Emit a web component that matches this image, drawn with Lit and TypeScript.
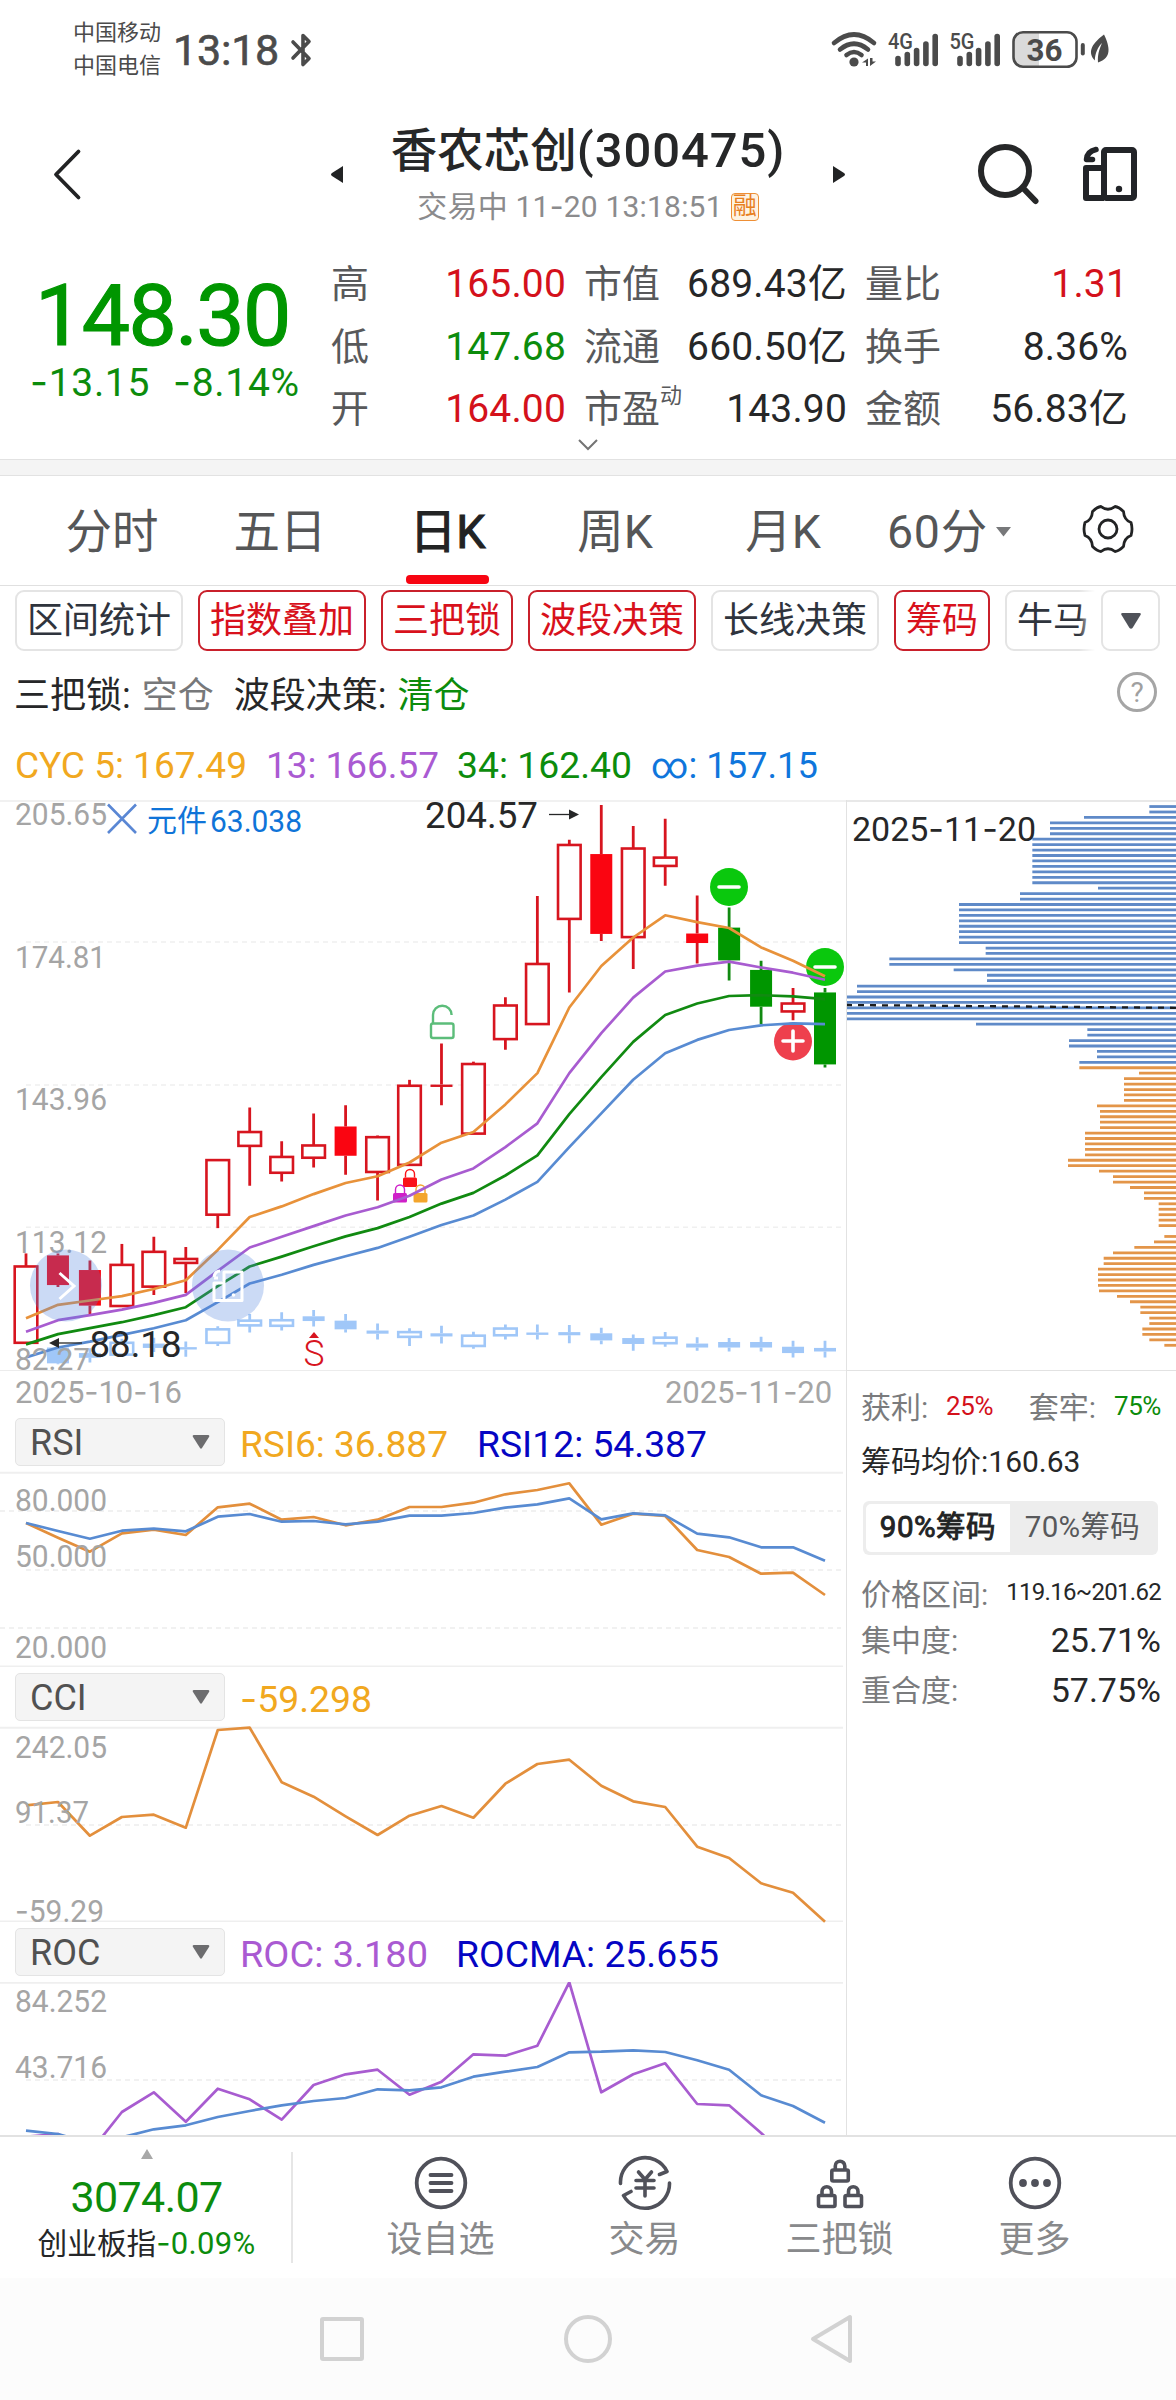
import { LitElement, html, svg, css } from "lit";
import { customElement, property } from "lit/decorators.js";

/* Hyphens are drawn with a wider glyph than the digit font offers. */
const num = (s: string) =>
  s.split(/(-)/).map((p) => (p === "-" ? html`<span class="dash">-</span>` : p));
const snum = (s: string) =>
  s.split(/(-)/).map((p) => (p === "-" ? svg`<tspan class="dash">-</tspan>` : p));

const label = (x: number, y: number, w: number, size: number, color: string, s: string, weight = 400) =>
  svg`<text x=${x} y=${y} textLength=${w} lengthAdjust="spacingAndGlyphs" font-size=${size} font-weight=${weight} fill=${color}>${snum(s)}</text>`;

const PITCH = 31.96;
const cx = (i: number) => 26 + PITCH * i;
const line = (vals: number[], y0: number, scale: number, color: string, w = 2.7) =>
  svg`<polyline fill="none" stroke=${color} stroke-width=${w} stroke-linejoin="round"
    points=${vals.map((v, i) => `${cx(i).toFixed(1)},${(y0 + v / scale).toFixed(1)}`).join(" ")} />`;

type Candle = [number, number, number, number, string];

const CANDLES: Candle[] = [
  [1172, 1205, 1398, 1398, "h"], [1172, 1177, 1252, 1257, "r"], [1190, 1214, 1304, 1327, "r"],
  [1148, 1201, 1305, 1305, "h"], [1130, 1168, 1256, 1277, "h"], [1156, 1186, 1196, 1272, "h"],
  [936, 936, 1074, 1108, "h"], [803, 865, 900, 1001, "h"], [888, 928, 968, 990, "h"],
  [818, 899, 930, 955, "h"], [797, 851, 925, 973, "r"], [874, 878, 966, 1038, "h"],
  [733, 748, 948, 948, "h"], [641, 745, 751, 797, "d"], [687, 693, 869, 869, "h"],
  [524, 545, 630, 657, "h"], [268, 440, 592, 592, "h"], [126, 139, 326, 512, "h"],
  [38, 162, 364, 382, "r"], [91, 148, 372, 453, "h"], [73, 171, 192, 242, "h"],
  [267, 363, 387, 439, "r"], [297, 348, 431, 482, "g"], [432, 455, 548, 592, "g"],
  [501, 540, 560, 582, "h"], [501, 512, 694, 702, "g"],
];
const INDEX: Candle[] = [
  [1378, 1396, 1397, 1397, "f"], [1405, 1410, 1450, 1452, "f"], [1412, 1424, 1436, 1448, "f"],
  [1388, 1398, 1428, 1428, "h"], [1385, 1400, 1411, 1421, "f"], [1395, 1409, 1415, 1433, "f"],
  [1356, 1364, 1398, 1406, "h"], [1325, 1342, 1354, 1372, "h"], [1321, 1341, 1355, 1367, "h"],
  [1315, 1331, 1343, 1357, "f"], [1325, 1342, 1364, 1372, "f"], [1349, 1367, 1375, 1390, "f"],
  [1361, 1371, 1383, 1406, "h"], [1355, 1374, 1382, 1400, "f"], [1370, 1380, 1406, 1413, "h"],
  [1352, 1362, 1379, 1390, "h"], [1352, 1372, 1378, 1390, "f"], [1353, 1371, 1379, 1399, "f"],
  [1360, 1374, 1392, 1402, "f"], [1377, 1386, 1401, 1418, "f"], [1371, 1385, 1399, 1408, "h"],
  [1384, 1400, 1410, 1418, "f"], [1386, 1396, 1410, 1420, "f"], [1383, 1396, 1410, 1420, "f"],
  [1393, 1408, 1424, 1435, "f"], [1393, 1411, 1420, 1435, "f"],
];
const MA: [string, number[]][] = [
  ["#e8923a", [1336, 1302, 1291, 1280, 1262, 1240, 1163, 1080, 1053, 1022, 994, 977, 942, 892, 865, 795, 716, 550, 445, 373, 317, 334, 349, 398, 432, 471]],
  ["#a85cd0", [1370, 1341, 1328, 1314, 1297, 1277, 1216, 1157, 1130, 1103, 1076, 1055, 1026, 985, 957, 903, 843, 716, 615, 525, 459, 444, 434, 449, 462, 480]],
  ["#118a11", [1402, 1376, 1361, 1346, 1328, 1308, 1255, 1205, 1180, 1154, 1129, 1108, 1080, 1046, 1019, 975, 924, 820, 726, 637, 569, 540, 521, 519, 522, 529]],
  ["#588bd2", [1435, 1410, 1395, 1378, 1361, 1341, 1295, 1248, 1226, 1201, 1179, 1158, 1130, 1100, 1076, 1036, 991, 903, 818, 733, 666, 632, 607, 595, 590, 592]],
];

/* Run lengths of the cost distribution: [rows, left edge]; 0 leaves a row empty. */
const BLUE_RUNS = [[2, 958], [1, 762], [3, 660], [9, 607], [1, 804], [2, 570], [8, 387], [2, 467], [2, 178], [1, 371], [2, 471], [2, 81], [5, 48], [1, 438], [2, 772], [2, 717], [2, 801], [1, 748]];
const ORANGE_RUNS = [[1, 748], [1, 927], [5, 882], [1, 801], [4, 810], [5, 765], [2, 714], [1, 807], [2, 849], [1, 900], [2, 942], [5, 986], [1, 0], [1, 1003], [1, 972], [1, 913], [1, 849], [2, 821], [4, 804], [1, 807], [1, 861], [1, 900], [2, 931], [2, 958], [2, 937], [1, 958], [1, 1003]];
const expand = (runs: number[][]) => runs.flatMap(([n, u]) => Array(n).fill(u) as number[]);

const vy = (v: number) => 790 + v / 2.529;

const candle = ([hi, top, bot, lo, t]: Candle, i: number, hollow: string) => {
  const x = cx(i);
  const color = t === "g" ? "#009600" : t === "r" ? "#fa0511" : hollow;
  const wick = t === "g" ? "#118a11" : hollow;
  const open = t === "h";
  return svg`
    <path d="M${x} ${vy(hi)}V${vy(top)}M${x} ${vy(bot)}V${vy(lo)}" stroke=${wick} stroke-width="2.8"/>
    ${open
      ? svg`<rect x=${x - 11.3} y=${vy(top)} width="22.6" height=${vy(bot) - vy(top)} fill="#fff" stroke=${color} stroke-width="2.6"/>`
      : svg`<rect x=${x - 11} y=${vy(top)} width="22" height=${vy(bot) - vy(top)} fill=${color}/>`}`;
};

const lock = (x: number, y: number, c: string) => svg`
  <path d="M${x - 4.5} ${y}v-3.500a4.500 4.500 0 0 1 9 0v3.500" fill="none" stroke=${c} stroke-width="1.4"/>
  <rect x=${x - 7} y=${y} width="14" height="9.5" rx="1.5" fill=${c}/>`;

const chartFont = css`
  text { font-family: Roboto, "Noto Sans CJK SC", sans-serif; }
  .dash { font-family: Inter, sans-serif; }
  svg { display: block; }
  .free { overflow: visible; }
`;

@customElement("kline-chart")
class KlineChart extends LitElement {
  static styles = [chartFont, css`:host { display: block; }`];
  render() {
    return html`<svg class="free" width="846" height="570" viewBox="0 800 846 570">
      <path d="M0 801H846" stroke="#ececec" stroke-width="1.4"/>
      <path d="M26 942H841M26 1085H841M26 1227.200H841" stroke="#f0f0f0" stroke-width="1.6" stroke-dasharray="5 4"/>
      ${INDEX.map((c, i) => candle(c, i, "#a0c7f8"))}
      ${CANDLES.map((c, i) => candle(c, i, "#d7151f"))}
      ${lock(410, 1177.5, "#fa1218")}${lock(400, 1193, "#cf1fc8")}${lock(420.5, 1193, "#f3a52c")}
      <g><circle cx="729" cy="887" r="19" fill="#0ac80d"/><path d="M719 887h20" stroke="#fff" stroke-width="3.6" stroke-linecap="round"/>
      <circle cx="825" cy="967" r="19" fill="#0ac80d"/><path d="M815 967h20" stroke="#fff" stroke-width="3.6" stroke-linecap="round"/>
      <circle cx="793" cy="1041.500" r="19" fill="#ee404d"/><path d="M783 1041h20M793 1031v20" stroke="#fff" stroke-width="3.6" stroke-linecap="round"/></g>
      ${MA.map(([c, v]) => line(v, 790, 2.529, c))}
      <g fill="none" stroke="#5cbd7a" stroke-width="2.4"><rect x="431" y="1023.500" width="22.500" height="14.500" rx="2"/><path d="M433 1023v-8a9.300 9.300 0 0 1 18.600 0"/></g>
      <path d="M309 1338l5-6 5 6z" fill="#d7151f"/>
      ${label(303.5, 1366, 21, 36, "#d7151f", "S", 300)}
      ${label(15, 825, 92, 31, "#a5a5a5", "205.65")}
      ${label(15, 968, 91, 31, "#a5a5a5", "174.81")}
      ${label(15, 1110, 92, 31, "#a5a5a5", "143.96")}
      ${label(15, 1252.5, 92, 31, "#a5a5a5", "113.12")}
      ${label(15, 1369.5, 75, 31, "#a5a5a5", "82.27")}
      <path d="M108 804.500L136 833M136 804.500L108 833" stroke="#5a87d4" stroke-width="2.6"/>
      ${label(147, 831, 60, 30, "#0f74d8", "元件")}
      ${label(210, 831.5, 92, 31, "#0f74d8", "63.038")}
      ${label(425, 828, 113, 37, "#262728", "204.57")}
      <path d="M549 814.500h22" stroke="#262728" stroke-width="1.3"/><path d="M569 809.500l10 5-10 5z" fill="#262728"/>
      ${label(89.5, 1357, 92, 37, "#262728", "88.18")}
      <path d="M82 1343H56" stroke="#262728" stroke-width="1.3"/><path d="M59 1338l-10 5 10 5z" fill="#262728"/>
      <circle cx="66" cy="1285.500" r="36" fill="#5485de" fill-opacity=".3"/>
      <path d="M59.500 1273l14.500 13-14.500 13" fill="none" stroke="#fff" stroke-width="3"/>
      <circle cx="228" cy="1285.500" r="36" fill="#5485de" fill-opacity=".3"/>
      <g fill="none" stroke="#fff" stroke-width="3" stroke-linejoin="round"><rect x="224" y="1272" width="18" height="28.500"/><path d="M224 1283h-10v17.500h10M214 1277q1-6 6-6M214 1278h4"/></g>
      <circle cx="233.500" cy="1295" r="1.800" fill="#fff"/>
    </svg>`;
  }
}

@customElement("cost-chart")
class CostChart extends LitElement {
  static styles = [chartFont, css`:host { display: block; }`];
  render() {
    const rows = [...expand(BLUE_RUNS).map((u) => [u, "#5f8ac8"]), ...expand(ORANGE_RUNS).map((u) => [u, "#e39549"])] as [number, string][];
    return html`<svg width="330" height="570" viewBox="847 800 330 570">
      <path d="M846 801H1177" stroke="#e0e0e0" stroke-width="1.4"/>
      ${rows.map(([u, c], i) => {
        if (!u) return null;
        const y = 790 + (44.7 + 14.71 * i) / 2.703;
        return svg`<path d="M${830 + u / 3} ${y}H1177" stroke=${c} stroke-width="2.8"/>`;
      })}
      <path d="M846 1005L1177 1007.800" stroke="#1c1c1c" stroke-width="2.300" stroke-dasharray="6 6"/>
      ${label(852, 841, 184, 34, "#262728", "2025-11-20")}
    </svg>`;
  }
}

interface Reading { text: string; color: string; x: number; w: number }
interface Study {
  name: string; top: number; height: number; readings: Reading[];
  grids: [number, number][]; labels: [string, number, number][];
  lines: [string, number[]][]; y0: number;
}
const STUDIES: Study[] = [
  {
    name: "RSI", top: 1472, height: 195, y0: 1370,
    readings: [{ text: "RSI6: 36.887", color: "#f1a820", x: 240, w: 208 }, { text: "RSI12: 54.387", color: "#0505c3", x: 477, w: 230 }],
    grids: [[0, 1511], [26, 1570], [0, 1628]],
    labels: [["80.000", 1510.5, 92], ["50.000", 1567, 92], ["20.000", 1658, 92]],
    lines: [
      ["#e38f3c", [459, 503, 545, 490, 479, 495, 412, 401, 449, 441, 466, 449, 411, 411, 398, 373, 360, 340, 464, 431, 438, 540, 561, 611, 608, 675]],
      ["#588bd2", [459, 483, 506, 482, 476, 484, 440, 432, 455, 453, 463, 455, 437, 437, 429, 413, 403, 385, 448, 430, 436, 491, 502, 532, 532, 572]],
    ],
  },
  {
    name: "CCI", top: 1727, height: 195, y0: 1670,
    readings: [{ text: "-59.298", color: "#f1a820", x: 240, w: 132 }],
    grids: [[26, 1825]],
    labels: [["242.05", 1757.5, 92], ["91.37", 1822.5, 74], ["-59.29", 1922, 89]],
    lines: [["#e38f3c", [406, 396, 497, 441, 434, 473, 180, 173, 337, 380, 439, 495, 437, 408, 443, 341, 282, 269, 347, 394, 411, 530, 564, 640, 668, 755]]],
  },
  {
    name: "ROC", top: 1982, height: 154, y0: 1670,
    readings: [{ text: "ROC: 3.180", color: "#aa5ad2", x: 240, w: 188 }, { text: "ROCMA: 25.655", color: "#0505c3", x: 456, w: 263 }],
    grids: [[26, 2080]],
    labels: [["84.252", 2012, 92], ["43.716", 2077.5, 92]],
    lines: [
      ["#a85cd0", [1400, 1392, 1447, 1326, 1267, 1355, 1256, 1288, 1349, 1245, 1213, 1199, 1274, 1235, 1153, 1157, 1127, 937, 1267, 1213, 1180, 1302, 1306, 1389, 1480, 1560]],
      ["#588bd2", [1382, 1392, 1420, 1402, 1378, 1366, 1341, 1323, 1306, 1293, 1284, 1258, 1261, 1252, 1220, 1205, 1191, 1147, 1145, 1141, 1146, 1171, 1199, 1276, 1308, 1358]],
    ],
  },
];

@customElement("study-panel")
class StudyPanel extends LitElement {
  static styles = [chartFont, css`
    :host { display: block; }
    .head { display: flex; height: 60px; align-items: center; padding: 0 0 0 15px; box-sizing: border-box; }
    .pick { display: flex; align-items: center; justify-content: space-between; box-sizing: border-box; width: 210px; height: 48px; margin-top: -1px;
      border: 1.5px solid #e4e4e4; border-radius: 5px; background: #f4f4f4; padding: 3px 14px 0 14px; color: #515151; font: 36px/44px Roboto, sans-serif; }
    .caret { margin-top: -3px; }
  `];
  @property({ attribute: false }) study!: Study;
  render() {
    const s = this.study;
    const last = s.height < 160;
    return html`
      <div class="head">
        <div class="pick"><span>${s.name}</span><svg class="caret" width="18" height="14"><path d="M2 0h14q2 0 1 2l-7 11q-1 1.500-2 0l-7-11q-1-2 1-2z" fill="#6c6c6e"/></svg></div>
        <svg width="610" height="60" viewBox="225 0 610 60">${s.readings.map((r) => label(r.x, 44.5, r.w, 36, r.color, r.text))}</svg>
      </div>
      <svg class=${last ? "" : "free"} width="846" height=${s.height} viewBox="0 ${s.top} 846 ${s.height}">
        <path d="M0 ${s.top + 0.8}H843" stroke="#efefef" stroke-width="2"/>
        ${last ? null : svg`<path d="M0 ${s.top + s.height - 0.8}H843" stroke="#efefef" stroke-width="1.600"/>`}
        ${s.grids.map(([x, y]) => svg`<path d="M${x} ${y}H841" stroke="#ededed" stroke-width="1.600" stroke-dasharray="5 4"/>`)}
        ${s.lines.map(([c, v]) => line(v, s.y0, 3, c))}
        ${s.labels.map(([t, y, w]) => label(15, y, w, 31, "#a5a5a5", t))}
      </svg>`;
  }
}

@customElement("app-root")
class AppRoot extends LitElement {
  static styles = css`
    :host { display: block; width: 1176px; height: 2400px; overflow: hidden; background: #fff; color: #262728; font-family: Roboto, "Noto Sans CJK SC", sans-serif; }
    * { box-sizing: border-box; }
    svg { display: block; }
    .dash { font-family: Inter, sans-serif; }
    .green { color: #0c8c0c; }
    .red { color: #d4111b; }
    .status { display: flex; height: 100px; padding-left: 73px; color: #4b4b4b; }
    .carriers { width: 100px; padding-top: 16px; font-size: 22px; line-height: 33px; }
    .clock { width: 117px; padding-top: 25px; font-size: 43px; line-height: 50px; letter-spacing: -0.2px; -webkit-text-stroke: 0.6px #4b4b4b; }
    .status .bt { margin-top: 32px; }
    .status .sys { margin-left: auto; }
    .head { display: flex; height: 140px; }
    .head .back { width: 331px; }
    .head .mid { display: flex; width: 514px; justify-content: space-between; }
    .arrow { margin-top: 66px; }
    .title { text-align: center; white-space: nowrap; }
    .title h1 { margin: 21px 0 0; font-size: 46.500px; line-height: 60px; font-weight: 500; }
    .title h1 span { font-size: 49px; letter-spacing: 0.900px; }
    .title .sub { display: flex; justify-content: center; align-items: center; gap: 8px; margin-top: 7px; font-size: 30px; line-height: 36px; color: #8b8b8d; }
    .sub .t { letter-spacing: 0.200px; }
    .badge { width: 28px; height: 28px; border: 1.500px solid #ee8f35; border-radius: 4px; background: #fef3e2; color: #e8801f; font-size: 24px; line-height: 24px; text-align: center; }
    .quote { display: flex; height: 199px; }
    .last { width: 331px; padding-left: 35px; }
    .price { margin-top: 34px; font-size: 86px; line-height: 84px; letter-spacing: -1.600px; color: #009600; -webkit-text-stroke: 1.200px #009600; }
    .chg { display: flex; gap: 23px; margin-top: 2px; margin-left: -5px; font-size: 39px; line-height: 44px; letter-spacing: 0.700px; white-space: nowrap; }
    .facts { display: grid; grid-template-columns: 235px 263px 263px; column-gap: 18px; grid-auto-rows: 62.500px; padding-top: 13px; font-size: 39px; white-space: nowrap; }
    .fact { display: flex; justify-content: space-between; line-height: 62px; letter-spacing: 0.150px; }
    .fact .k { color: #58595b; font-size: 38px; letter-spacing: 0; }
    .fact .k sup { font-size: 22px; line-height: 0; vertical-align: 19px; }
    .more { display: flex; justify-content: center; height: 20px; align-items: flex-start; }
    .band { height: 17px; background: #f4f4f4; border: solid #e2e2e2; border-width: 1.500px 0; }
    .tabs { display: flex; height: 109px; padding-left: 28px; font-size: 46.500px; color: #555657; }
    .tab { display: flex; flex-direction: column; align-items: center; width: 168px; height: 109px; padding-top: 3px; line-height: 106px; white-space: nowrap; }
    .tab.on { color: #222324; -webkit-text-stroke: 1.100px #222324; width: 167px; }
    .bar { flex: none; width: 83px; height: 8.500px; margin-top: -10px; border-radius: 4px; background: #f70512; }
    .mins { display: flex; align-items: center; gap: 8px; height: 109px; padding: 3px 0 0 20px; width: 214px; letter-spacing: 0.700px; white-space: nowrap; line-height: 106px; }
    .gear { margin-top: 26px; }
    .chips { display: flex; height: 66px; padding: 4px 0 0 15px; border-top: 1.500px solid #e0e0e0; }
    .strip { display: flex; gap: 15px; width: 1080px; height: 61px; overflow: hidden; position: relative; }
    .chip { flex: none; height: 61px; padding: 1px 10px 0; border: 2px solid #e4e4e4; border-radius: 9px; font-size: 36px; line-height: 57px; color: #2f343d; white-space: nowrap; }
    .chip.on { border-color: #c9202b; color: #d8111c; }
    .chip.cut { width: 120px; }
    .fade { position: absolute; right: 0; top: 0; width: 16px; height: 61px; background: linear-gradient(90deg, #fff0, #fff); }
    .drop { display: flex; align-items: center; justify-content: center; width: 59px; height: 61px; margin-left: 6px; border: 2px solid #e4e4e4; border-radius: 9px; }
    .signals { display: flex; align-items: center; height: 81px; padding: 0 19px 0 14px; font-size: 36px; white-space: nowrap; }
    .signals .g { color: #77787a; margin: 0 20px 0 11px; }
    .signals .c { color: #0c8c0c; margin-left: 11px; }
    .help { display: flex; align-items: center; justify-content: center; width: 40px; height: 40px; margin-left: auto; margin-top: 1px; border: 3px solid #a5a5a5; border-radius: 50%; font-size: 28px; color: #a0a0a0; }
    .cyc { height: 68px; }
    .cyc text { font-family: Roboto, "Noto Sans CJK SC", sans-serif; }
    .body { display: flex; height: 1337px; overflow: hidden; border-bottom: 2px solid #e2e2e2; }
    .left { width: 846px; }
    .side { width: 330px; border-left: 1.500px solid #e2e2e2; }
    .dates { display: flex; justify-content: space-between; height: 42px; padding: 0 14px 0 15px; border-top: 1.500px solid #ececec; font-size: 31px; line-height: 41px; color: #a5a5a5; letter-spacing: -0.100px; }
    .info { padding: 11px 15px 0 14px; border-top: 1.500px solid #e2e2e2; font-size: 30px; color: #7a7b7d; }
    .row { display: flex; justify-content: space-between; align-items: center; height: 46px; white-space: nowrap; }
    .row .v { color: #262728; font-size: 34px; padding-top: 3px; }
    .row .s { font-size: 26px; letter-spacing: -0.400px; padding-top: 2px; }
    .row .r { font-size: 24px; color: #262728; letter-spacing: -0.700px; }
    .avg { height: 50px; margin-top: 9px; line-height: 50px; color: #262728; }
    .seg { display: flex; margin: 14px 3px 0 2px; height: 54px; padding: 3px; border-radius: 6px; background: #ededed; font-size: 29.500px; line-height: 47px; text-align: center; color: #58595b; letter-spacing: 0.300px; white-space: nowrap; }
    .seg .a { width: 144px; border-radius: 5px 0 0 5px; background: #fff; color: #222324; -webkit-text-stroke: 0.900px #222324; letter-spacing: 0.500px; }
    .seg .b { flex: 1; }
    .range { margin-top: 14px; }
    .overlap { margin-top: 4px; }
    .dock { display: flex; height: 141px; }
    .idx { width: 293px; text-align: center; white-space: nowrap; }
    .idx svg { margin: 12px auto 0; }
    .idx .n { margin-top: 14px; font-size: 43px; line-height: 48px; letter-spacing: -0.600px; color: #0c8c0c; }
    .idx .d { margin-top: 2px; font-size: 29.700px; line-height: 40px; color: #262728; }
    .idx .d .green { letter-spacing: 0.300px; font-size: 31px; }
    .sep { width: 1.500px; height: 111px; margin-top: 15px; background: #e6e6e6; margin-left: -2px; }
    .acts { display: grid; grid-template-columns: 204px 204px 186px 204px; margin-left: 46px; }
    .act { display: flex; flex-direction: column; align-items: center; padding-top: 18px; gap: 2px; font-size: 36px; line-height: 54px; color: #88898b; }
    .nav { display: flex; justify-content: center; height: 122px; background: #fcfcfc; }
    .nav svg { flex: none; }
  `;

  private facts: [string, string, string, string?][] = [
    ["高", "165.00", "red"], ["市值", "689.43亿", ""], ["量比", "1.31", "red"],
    ["低", "147.68", "green"], ["流通", "660.50亿", ""], ["换手", "8.36%", ""],
    ["开", "164.00", "red"], ["市盈", "143.90", "", "动"], ["金额", "56.83亿", ""],
  ];
  private chips: [string, boolean][] = [
    ["区间统计", false], ["指数叠加", true], ["三把锁", true], ["波段决策", true], ["长线决策", false], ["筹码", true],
  ];

  private smallLock(x: number, y: number) {
    return svg`<rect x=${x} y=${y} width="16.500" height="11" rx="1.500"/><path d="M${x + 3.5} ${y}v-4a4.750 4.750 0 0 1 9.500 0v4"/>`;
  }

  render() {
    const bars = (x: number) => [[0, 56], [9.3, 52], [18.6, 48], [27.9, 41.5], [37.2, 34]].map(([d, t]) =>
      svg`<path d="M${x + d} ${t + 2.5}V63.500" stroke="#4b4b4b" stroke-width="5.600" stroke-linecap="round"/>`);
    return html`
      <div class="status">
        <div class="carriers"><div>中国移动</div><div>中国电信</div></div>
        <div class="clock">13:18</div>
        <svg class="bt" width="24" height="36" viewBox="290 32 24 36"><path d="M293 42L309 58.500 303 64.500V35.500L309 41.500 293 58" fill="none" stroke="#4b4b4b" stroke-width="3.600" stroke-linejoin="round" stroke-linecap="round"/></svg>
        <svg class="sys" width="356" height="90" viewBox="820 0 356 90" font-family="Roboto, sans-serif">
          <g fill="none" stroke="#4b4b4b" stroke-width="4.600" stroke-linecap="round">
            <path d="M834 43Q854 26 874 43"/><path d="M840 49.500Q854 38 868 49.500"/><path d="M846.500 55Q854 49 861.500 55"/></g>
          <circle cx="854" cy="62" r="4.600" fill="#4b4b4b"/>
          <path d="M862 62.500l6-4v7.500h-2v-3.500zM870 58v8l6-4.500h-3.500v-3.500z" fill="#4b4b4b"/>
          <text x="888" y="49" font-size="22.500" font-weight="500" fill="#4b4b4b" textLength="25" lengthAdjust="spacingAndGlyphs">4G</text>${bars(898)}
          <text x="949.500" y="49" font-size="22.500" font-weight="500" fill="#4b4b4b" textLength="25" lengthAdjust="spacingAndGlyphs">5G</text>${bars(960)}
          <path d="M1022 32h17v34.500h-17q-8-1-8-9v-16.500q0-8 8-9z" fill="#dadada"/>
          <rect x="1013.500" y="32.200" width="63" height="34.600" rx="9.500" fill="none" stroke="#4b4b4b" stroke-width="2.600"/>
          <text x="1026.500" y="61" font-size="32" font-weight="700" fill="#4b4b4b" textLength="36" lengthAdjust="spacingAndGlyphs">36</text>
          <path d="M1082.800 45v8.500" stroke="#4b4b4b" stroke-width="4" stroke-linecap="round"/>
          <path d="M1104 34.500C1090 45 1088 53 1094.800 60.500 1095 53 1098 47 1102 43 1099 50 1097.500 55 1098 62.500 1112 58 1110 47 1104 34.500z" fill="#4b4b4b"/>
        </svg>
      </div>
      <div class="head">
        <svg class="back" width="331" height="140" viewBox="0 100 331 140"><path d="M78.500 151.500L56 174.500 78.500 197.500" fill="none" stroke="#222324" stroke-width="3.800" stroke-linecap="round" stroke-linejoin="round"/></svg>
        <div class="mid">
          <svg class="arrow" width="12" height="17"><path d="M12 0v17L1 10q-2-1.500 0-3z" fill="#222324"/></svg>
          <div class="title"><h1>香农芯创<span>(300475)</span></h1>
            <div class="sub"><span class="t">交易中 ${num("11-20")} 13:18:51</span><span class="badge">融</span></div></div>
          <svg class="arrow" width="12" height="17"><path d="M0 0v17L11 10q2-1.500 0-3z" fill="#222324"/></svg>
        </div>
        <svg width="331" height="140" viewBox="845 100 331 140">
          <circle cx="1005" cy="171" r="24" fill="none" stroke="#262728" stroke-width="6"/><path d="M1023 188l12.500 13" stroke="#262728" stroke-width="6" stroke-linecap="round"/>
          <g fill="none" stroke="#222428" stroke-width="6" stroke-linejoin="round"><rect x="1104" y="150" width="30" height="48" rx="2"/><path d="M1104 168h-18v30h18"/></g>
          <circle cx="1119" cy="189" r="3.200" fill="#222428"/>
          <path d="M1096 149.500q-9 2-9.500 10h6" fill="none" stroke="#222428" stroke-width="5.500" stroke-linecap="round" stroke-linejoin="round"/>
        </svg>
      </div>
      <div class="quote">
        <div class="last"><div class="price">148.30</div><div class="chg green"><span>${num("-13.15")}</span><span>${num("-8.14%")}</span></div></div>
        <div class="facts">${this.facts.map(([k, v, c, sup]) => html`<div class="fact"><span class="k">${k}${sup ? html`<sup>${sup}</sup>` : null}</span><span class=${c}>${v}</span></div>`)}</div>
      </div>
      <div class="more"><svg width="22" height="14"><path d="M2 1l9 9 9-9" fill="none" stroke="#747474" stroke-width="2"/></svg></div>
      <div class="band"></div>
      <div class="tabs">
        ${["分时", "五日", "日K", "周K", "月K"].map((t) => html`<div class="tab ${t === "日K" ? "on" : ""}"><span>${t}</span>${t === "日K" ? html`<div class="bar"></div>` : null}</div>`)}
        <div class="mins"><span>60分</span><svg width="15" height="10"><path d="M0 0h15L7.500 9.500z" fill="#77787a"/></svg></div>
        <svg class="gear" width="54" height="54" viewBox="-27 -27 54 54"><g fill="none" stroke="#222324" stroke-width="2.800" stroke-linejoin="round">
          <path d="M-7 -22.500Q0 -17 7 -22.500Q11 -22 15.500 -17.500Q16 -9 23 -6.500Q25 0 23 6.500Q16 9 15.500 17.500Q11 22 7 22.500Q0 17 -7 22.500Q-11 22 -15.500 17.500Q-16 9 -23 6.500Q-25 0 -23 -6.500Q-16 -9 -15.500 -17.500Q-11 -22 -7 -22.500z"/><circle r="9"/></g></svg>
      </div>
      <div class="chips">
        <div class="strip">${this.chips.map(([t, on]) => html`<div class="chip ${on ? "on" : ""}">${t}</div>`)}<div class="chip cut">牛马</div><div class="fade"></div></div>
        <div class="drop"><svg width="20" height="16"><path d="M1.500 0h17q2 0 1 2l-8 13q-1.500 1.500-3 0l-8-13q-1-2 1-2z" fill="#4f5259"/></svg></div>
      </div>
      <div class="signals"><span>三把锁:</span><span class="g">空仓</span><span>波段决策:</span><span class="c">清仓</span><span class="help">?</span></div>
      <svg class="cyc" width="1176" height="68" viewBox="0 732 1176 68">
        ${label(15, 778, 232, 36, "#f1a820", "CYC 5: 167.49")}
        ${label(266, 778, 173, 36, "#aa5ad2", "13: 166.57")}
        ${label(457, 778, 175, 36, "#0c8c0c", "34: 162.40")}
        ${label(651, 778, 167, 36, "#0f76dc", "∞: 157.15")}
      </svg>
      <div class="body">
        <div class="left">
          <kline-chart></kline-chart>
          <div class="dates"><span>${num("2025-10-16")}</span><span>${num("2025-11-20")}</span></div>
          ${STUDIES.map((s) => html`<study-panel .study=${s}></study-panel>`)}
        </div>
        <div class="side">
          <cost-chart></cost-chart>
          <div class="info">
            <div class="row"><span>获利:</span><span class="s red">25%</span><span></span><span>套牢:</span><span class="s green">75%</span></div>
            <div class="avg">筹码均价:160.63</div>
            <div class="seg"><div class="a">90%筹码</div><div class="b">70%筹码</div></div>
            <div class="row range"><span>价格区间:</span><span class="r">119.16~201.62</span></div>
            <div class="row"><span>集中度:</span><span class="v">25.71%</span></div>
            <div class="row overlap"><span>重合度:</span><span class="v">57.75%</span></div>
          </div>
        </div>
      </div>
      <div class="dock">
        <div class="idx"><svg width="12" height="10"><path d="M6 0l6 10H0z" fill="#a8a8a8"/></svg><div class="n">3074.07</div><div class="d">创业板指<span class="green">${num("-0.09%")}</span></div></div>
        <div class="sep"></div>
        <div class="acts">
          <div class="act"><svg width="56" height="56" viewBox="-28 -28 56 56"><g fill="none" stroke="#50515a" stroke-width="3.800" stroke-linecap="round"><circle r="24.300"/><path d="M-10.500 -8h21M-10.500 0h21M-10.500 8h21"/></g></svg><span>设自选</span></div>
          <div class="act"><svg width="56" height="56" viewBox="-28 -28 56 56"><g fill="none" stroke="#50515a" stroke-width="3.600" stroke-linecap="round" stroke-linejoin="round"><path d="M-24.500 0.500A24.500 24.500 0 0 1 22 -11.500L14.500 -8.500M24.500 0A24.500 24.500 0 0 1 -21.500 12.500L-14 8.500"/><path d="M-6.500 -11l6.500 7.500 6.500 -7.500M-9 -2.500h18M-9 5h18M0 -2.500V13"/></g></svg><span>交易</span></div>
          <div class="act"><svg width="56" height="56" viewBox="-28 -28 56 56"><g fill="none" stroke="#50515a" stroke-width="3.600">${this.smallLock(-8.2, -13)}${this.smallLock(-21.5, 12.5)}${this.smallLock(5, 12.5)}</g></svg><span>三把锁</span></div>
          <div class="act"><svg width="56" height="56" viewBox="-28 -28 56 56"><circle r="24.300" fill="none" stroke="#50515a" stroke-width="3.800"/><g fill="#50515a"><circle cx="-12" r="3.900"/><circle r="3.900"/><circle cx="12" r="3.900"/></g></svg><span>更多</span></div>
        </div>
      </div>
      <div class="nav"><svg width="560" height="122" viewBox="308 2278 560 122"><g fill="none" stroke="#d2d2d2" stroke-width="4" stroke-linejoin="round"><rect x="322" y="2319" width="40" height="40" rx="1"/><circle cx="588" cy="2339" r="22"/><path d="M813 2339L850 2317V2361z"/></g></svg></div>
    `;
  }
}
